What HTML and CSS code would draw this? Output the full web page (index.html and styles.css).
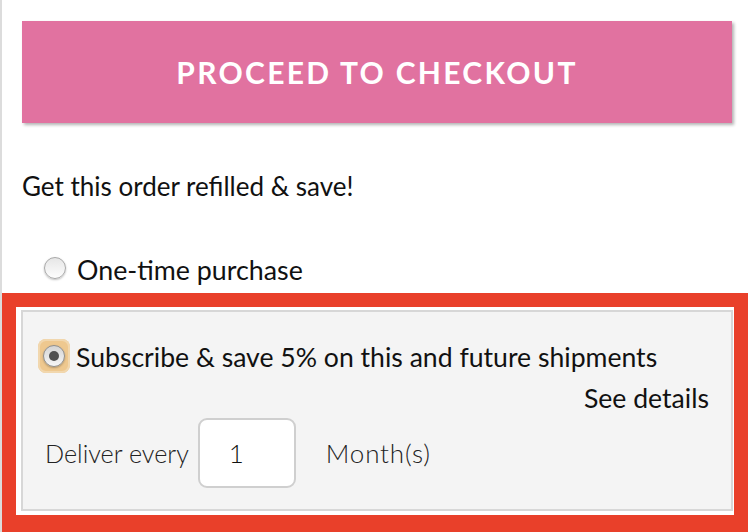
FILE: index.html
```html
<!DOCTYPE html>
<html>
<head>
<meta charset="utf-8">
<link rel="stylesheet" href="styles.css">
</head>
<body>
<div class="page">
  <div class="top">
    <button class="checkout">PROCEED TO CHECKOUT</button>
    <p class="refill">Get this order refilled &amp; save!</p>
    <label class="option one-time">
      <span class="radio"></span>
      <span class="opt-text">One-time purchase</span>
    </label>
  </div>
  <div class="highlight">
    <div class="sub-box">
      <label class="option subscribe">
        <span class="focus-ring"><span class="radio checked"><span class="dot"></span></span></span>
        <span class="opt-text">Subscribe &amp; save 5% on this and future shipments</span>
      </label>
      <div class="details-row"><span class="details">See details</span></div>
      <div class="deliver-row">
        <span class="deliver-label">Deliver every</span>
        <span class="qty">1</span>
        <span class="unit">Month(s)</span>
      </div>
    </div>
  </div>
</div>
</body>
</html>
```
FILE: styles.css
```css
html, body {
  margin: 0;
  padding: 0;
  background: #fff;
}
body {
  font-family: Lato, "Open Sans", sans-serif;
  color: #111;
}
.page {
  width: 748px;
  height: 532px;
  border-left: 2px solid #dcdcdc;
  overflow: hidden;
}
.top {
  padding: 21px 16px 0 20px;
}
.checkout {
  display: flex;
  align-items: center;
  justify-content: center;
  width: 710px;
  height: 102px;
  margin: 0;
  border: 0;
  background: #e172a0;
  color: #fff;
  font-family: Lato, sans-serif;
  font-weight: 700;
  font-size: 30px;
  letter-spacing: 2.3px;
  box-shadow: 2px 2px 3px rgba(0, 0, 0, 0.3);
  padding: 0;
}
.refill {
  margin: 49px 0 0 0;
  font-size: 26px;
  line-height: 28px;
}
.option {
  display: flex;
  align-items: center;
}
.one-time {
  margin: 56px 0 0 22px;
  height: 24px;
}
.one-time .opt-text {
  margin-left: 11px;
  font-size: 26.8px;
  line-height: 24px;
  position: relative;
  top: 2px;
}
.radio {
  display: inline-block;
  width: 20px;
  height: 20px;
  border-radius: 50%;
  border: 1px solid #a8a8a8;
  background: linear-gradient(#e6e6e6, #fdfdfd);
  box-shadow: 0 1px 2px rgba(0, 0, 0, 0.25);
  flex: none;
}
.highlight {
  margin-top: 13px;
  margin-right: 2px;
  border: 14px solid #e9402a;
  border-bottom-width: 24px;
  background: #fff;
  padding: 3px 1px 4px 5px;
}
.sub-box {
  border: 2px solid #d7d7d7;
  background: #f4f4f4;
  padding: 27px 22px 21px 15px;
}
.subscribe {
  height: 34px;
}
.focus-ring {
  display: flex;
  align-items: center;
  justify-content: center;
  width: 32px;
  height: 34px;
  border-radius: 8px;
  background: #eec88f;
  box-shadow: inset 0 0 0 2px #f1d7ae;
  flex: none;
}
.radio.checked {
  width: 20px;
  height: 20px;
  border: 1px solid #8f8f8f;
  background: linear-gradient(#d4d4d4, #f6f6f6);
  display: flex;
  align-items: center;
  justify-content: center;
}
.dot {
  width: 10px;
  height: 10px;
  border-radius: 50%;
  background: #505050;
}
.subscribe .opt-text {
  margin-left: 6px;
  font-size: 26.6px;
  line-height: 24px;
  position: relative;
  top: 1px;
}
.details-row {
  display: flex;
  justify-content: flex-end;
  margin-top: 13px;
  height: 24px;
}
.details {
  font-size: 26.6px;
  line-height: 24px;
}
.deliver-row {
  display: flex;
  align-items: center;
  margin-top: 8px;
  height: 70px;
  padding-left: 7px;
}
.deliver-label {
  font-size: 25.2px;
  font-weight: 300;
  color: #222;
}
.qty {
  box-sizing: border-box;
  width: 98px;
  height: 70px;
  margin-left: 9px;
  border: 2px solid #cfcfcf;
  border-radius: 9px;
  background: #fff;
  font-size: 26px;
  font-weight: 300;
  display: flex;
  align-items: center;
  padding-left: 29px;
}
.unit {
  margin-left: 30px;
  font-size: 26px;
  font-weight: 300;
  color: #222;
  letter-spacing: 0.8px;
}
```
